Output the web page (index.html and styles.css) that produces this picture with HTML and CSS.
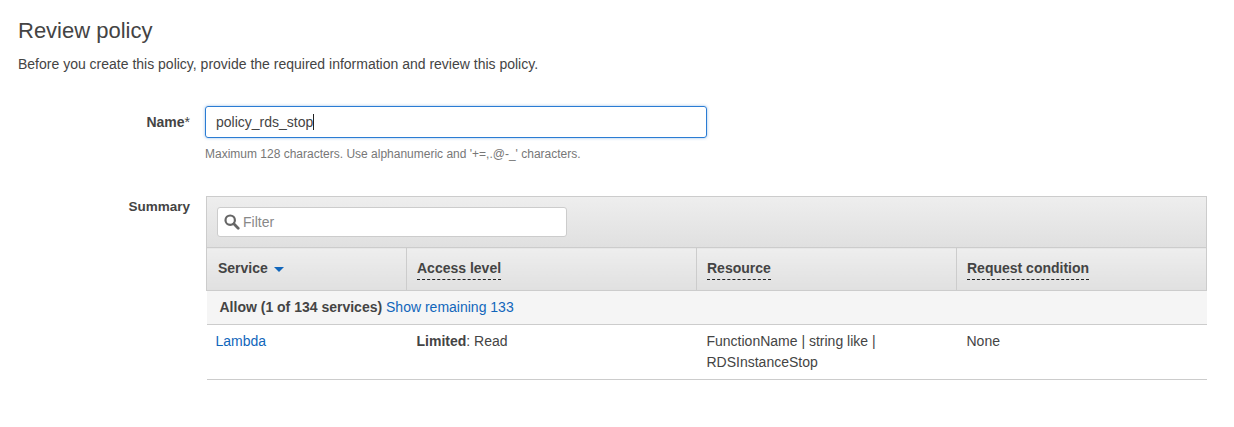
FILE: index.html
```html
<!DOCTYPE html>
<html lang="en">
<head>
    <meta charset="UTF-8">
    <title>Review policy</title>
    <link rel="stylesheet" href="styles.css">
</head>
<body>
    <h1 class="title">Review policy</h1>
    <p class="intro">Before you create this policy, provide the required information and review this policy.</p>

    <div class="form-row name-row">
        <div class="form-label"><b>Name</b>*</div>
        <div class="form-body">
            <div class="name-field"><span>policy_rds_stop</span><i class="caret"></i></div>
            <div class="hint">Maximum 128 characters. Use alphanumeric and '+=,.@-_' characters.</div>
        </div>
    </div>

    <div class="form-row summary-row">
        <div class="form-label"><b>Summary</b></div>
        <div class="summary">
            <div class="toolbar">
                <div class="filter">
                    <svg class="search-icon" width="16" height="16" viewBox="0 0 16 16">
                        <circle cx="6.2" cy="6.2" r="4.7" fill="none" stroke="#666" stroke-width="2.2"></circle>
                        <path d="M9.8 9.8l4.4 4.4" stroke="#666" stroke-width="2.8" stroke-linecap="round"></path>
                    </svg>
                    <span>Filter</span>
                </div>
            </div>
            <table class="policy-table">
                <colgroup>
                    <col class="col-service">
                    <col class="col-access">
                    <col class="col-resource">
                    <col>
                </colgroup>
                <thead>
                    <tr>
                        <th class="first-head">Service <i class="sort-arrow"></i></th>
                        <th><span class="dashed">Access level</span></th>
                        <th><span class="dashed">Resource</span></th>
                        <th><span class="dashed">Request condition</span></th>
                    </tr>
                </thead>
                <tbody>
                    <tr class="group-row">
                        <td colspan="4"><b>Allow (1 of 134 services)</b> <a href="#">Show remaining 133</a></td>
                    </tr>
                    <tr class="data-row">
                        <td class="first-cell"><a href="#">Lambda</a></td>
                        <td><b>Limited</b>: Read</td>
                        <td>FunctionName | string like |<br>RDSInstanceStop</td>
                        <td>None</td>
                    </tr>
                </tbody>
            </table>
        </div>
    </div>
</body>
</html>
```

FILE: styles.css
```css
body {
    margin: 0;
    padding: 19px 27px 0 18px;
    font-family: "Liberation Sans", Arial, sans-serif;
    font-size: 14px;
    color: #444444;
    background-color: #ffffff;
}

a {
    color: #1166bb;
    text-decoration: none;
}

.title {
    margin: 0;
    font-size: 22px;
    line-height: 24px;
    font-weight: normal;
}

.intro {
    margin: 12px 0 0 0;
    font-size: 14px;
    line-height: 18px;
}

/* Label column + content column */
.form-row {
    display: flex;
}

.form-label {
    width: 172px;
    flex-shrink: 0;
    text-align: right;
    font-size: 14px;
}

.name-row {
    margin-top: 33px;
}

.name-row .form-label {
    padding-top: 8px;
}

.form-body {
    margin-left: 15px;
}

.name-field {
    display: flex;
    align-items: center;
    box-sizing: border-box;
    width: 502px;
    height: 32px;
    padding-left: 10px;
    border: 1px solid #2b7cd3;
    border-radius: 3px;
    box-shadow: 0 0 3px rgba(43, 124, 211, 0.5);
    font-size: 14px;
}

.caret {
    width: 1px;
    height: 16px;
    background-color: #222222;
}

.hint {
    margin-top: 9px;
    font-size: 12px;
    line-height: 14px;
    color: #777777;
}

.summary-row {
    margin-top: 35px;
}

.summary-row .form-label {
    padding-top: 3px;
    font-size: 13.5px;
}

.summary {
    flex: 1;
    margin-left: 16px;
}

.toolbar {
    box-sizing: border-box;
    height: 51px;
    padding: 10px;
    border: 1px solid #cccccc;
    border-bottom: 0;
    background: linear-gradient(#eeeeee, #e0e0e0);
}

.filter {
    display: flex;
    align-items: center;
    gap: 3px;
    box-sizing: border-box;
    width: 350px;
    height: 30px;
    padding-left: 6px;
    border: 1px solid #cccccc;
    border-radius: 3px;
    background-color: #ffffff;
    color: #888888;
}

.policy-table {
    width: 100%;
    table-layout: fixed;
    border-collapse: collapse;
}

.col-service {
    width: 200px;
}

.col-access {
    width: 290px;
}

.col-resource {
    width: 260px;
}

.policy-table th {
    height: 43px;
    padding: 0 10px 2px 10px;
    box-sizing: border-box;
    border: 1px solid #cccccc;
    background: linear-gradient(#eeeeee, #e0e0e0);
    text-align: left;
    font-size: 14px;
}

.policy-table .first-head {
    padding-left: 11px;
}

.dashed {
    padding-bottom: 3px;
    border-bottom: 1px dashed #222222;
}

.sort-arrow {
    display: inline-block;
    margin-left: 2px;
    vertical-align: middle;
    border-top: 5px solid #1166bb;
    border-left: 5px solid transparent;
    border-right: 5px solid transparent;
}

.group-row td {
    height: 34px;
    padding: 0 0 2px 13px;
    box-sizing: border-box;
    border-bottom: 1px solid #cccccc;
    background-color: #f5f5f5;
}

.data-row td {
    height: 55px;
    padding: 6px 10px 0 10px;
    box-sizing: border-box;
    border-bottom: 1px solid #cccccc;
    vertical-align: top;
    line-height: 21px;
}

.data-row .first-cell {
    padding-left: 9px;
}
```
